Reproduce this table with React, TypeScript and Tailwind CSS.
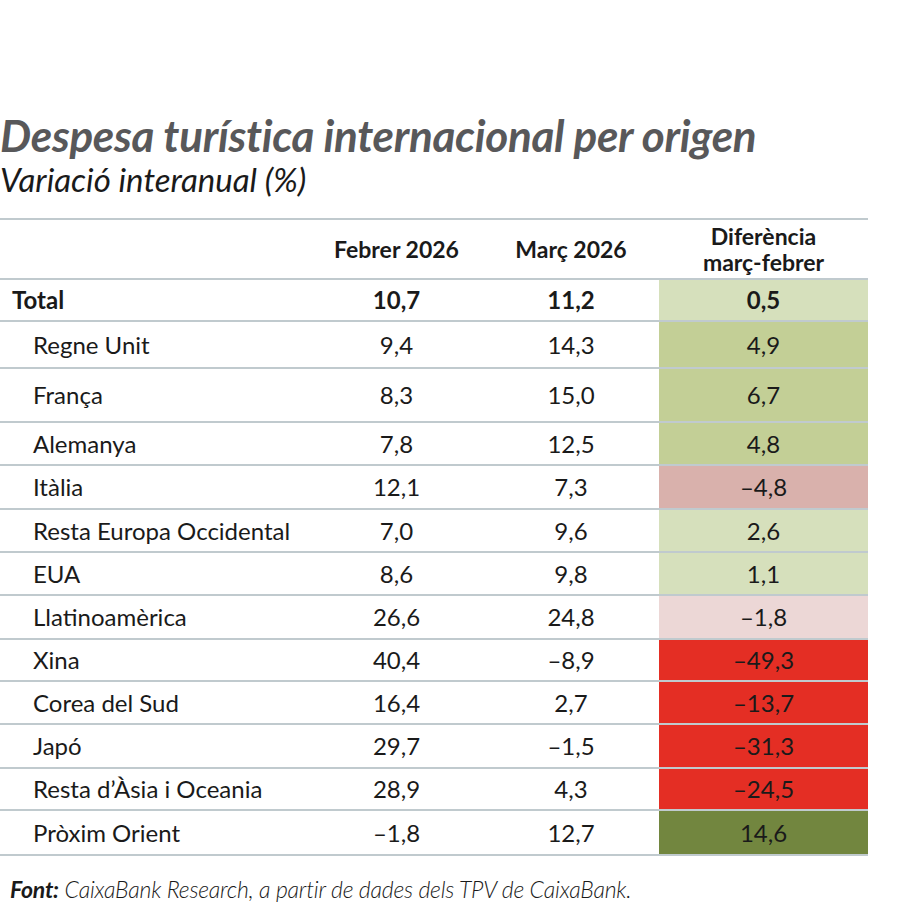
const rows = [
  { name: "Total", feb: "10,7", mar: "11,2", diff: "0,5", bg: "bg-[#d6e0bc]", h: "h-[42px]", bold: true },
  { name: "Regne Unit", feb: "9,4", mar: "14,3", diff: "4,9", bg: "bg-[#c3cf96]", h: "h-[47px]" },
  { name: "França", feb: "8,3", mar: "15,0", diff: "6,7", bg: "bg-[#c3cf96]", h: "h-[54px]" },
  { name: "Alemanya", feb: "7,8", mar: "12,5", diff: "4,8", bg: "bg-[#c3cf96]", h: "h-[43px]" },
  { name: "Itàlia", feb: "12,1", mar: "7,3", diff: "–4,8", bg: "bg-[#d9b1ac]", h: "h-[44px]" },
  { name: "Resta Europa Occidental", feb: "7,0", mar: "9,6", diff: "2,6", bg: "bg-[#d6e0bc]", h: "h-[43px]" },
  { name: "EUA", feb: "8,6", mar: "9,8", diff: "1,1", bg: "bg-[#d6e0bc]", h: "h-[43px]" },
  { name: "Llatinoamèrica", feb: "26,6", mar: "24,8", diff: "–1,8", bg: "bg-[#ecd7d6]", h: "h-[44px]" },
  { name: "Xina", feb: "40,4", mar: "–8,9", diff: "–49,3", bg: "bg-[#e42e24]", h: "h-[42px]" },
  { name: "Corea del Sud", feb: "16,4", mar: "2,7", diff: "–13,7", bg: "bg-[#e42e24]", h: "h-[43px]" },
  { name: "Japó", feb: "29,7", mar: "–1,5", diff: "–31,3", bg: "bg-[#e42e24]", h: "h-[44px]" },
  { name: "Resta d’Àsia i Oceania", feb: "28,9", mar: "4,3", diff: "–24,5", bg: "bg-[#e42e24]", h: "h-[42px]" },
  { name: "Pròxim Orient", feb: "–1,8", mar: "12,7", diff: "14,6", bg: "bg-[#72863f]", h: "h-[45px]" },
];

export default function App() {
  return (
    <div className="w-[900px] h-[913px] bg-white font-['Lato',sans-serif] text-[#1a1a1a]">
      <div className="pt-[110px]">
        <h1 className="text-[44px] leading-[50px] font-bold italic text-[#58585a] tracking-[-0.3px]">
          Despesa turística internacional per origen
        </h1>
        <p className="text-[33px] leading-[42px] italic text-[#1a1a1a] -mt-[2px]">Variació interanual (%)</p>
      </div>

      <div className="mt-[18px] w-[868px] border-t-2 border-[#c0cace]">
        <div className="grid grid-cols-[310px_173px_176px_209px] h-[60px] border-b-2 border-[#c0cace] items-center text-[23px] font-bold">
          <div />
          <div className="text-center">Febrer 2026</div>
          <div className="text-center">Març 2026</div>
          <div className="text-center leading-[26px]">
            Diferència
            <br />
            març-febrer
          </div>
        </div>
        {rows.map((r) => (
          <div
            key={r.name}
            className={`grid grid-cols-[310px_173px_176px_209px] ${r.h} border-b-2 border-[#c0cace] text-[24px] ${r.bold ? "font-bold" : ""}`}
          >
            <div className={`flex items-center ${r.bold ? "pl-[12px]" : "pl-[33px]"}`}>{r.name}</div>
            <div className="flex items-center justify-center">{r.feb}</div>
            <div className="flex items-center justify-center">{r.mar}</div>
            <div className={`flex items-center justify-center ${r.bg}`}>{r.diff}</div>
          </div>
        ))}
      </div>

      <p className="mt-[16px] pl-[10px] text-[23px] italic font-light text-[#1a1a1a] tracking-[-0.2px]">
        <span className="font-bold">Font:</span> CaixaBank Research, a partir de dades dels TPV de CaixaBank.
      </p>
    </div>
  );
}
